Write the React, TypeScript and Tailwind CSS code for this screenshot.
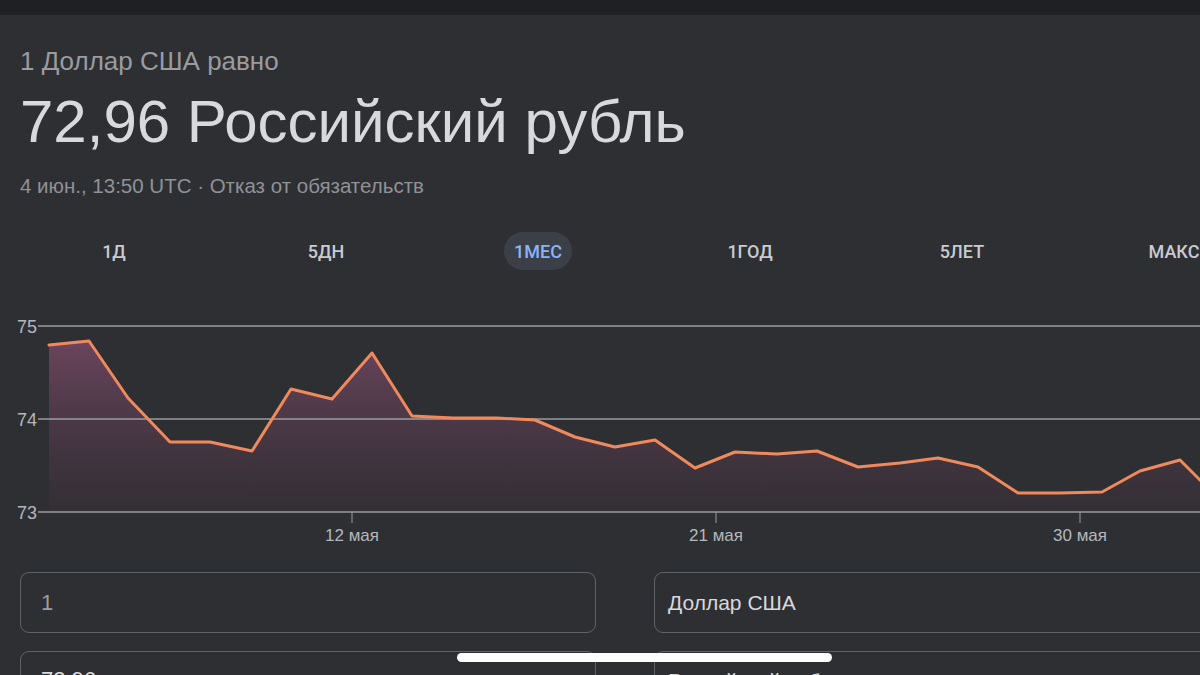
import React from "react";

const pts: [number, number][] = [
  [49, 345], [89, 341], [128, 398], [170, 442], [210, 442], [252, 451], [291, 389],
  [332, 399], [372, 353], [412, 416], [453, 418], [497, 418], [535, 420], [575, 437],
  [615, 447], [655, 440], [695, 468], [735, 452], [777, 454], [817, 451], [858, 467],
  [900, 463], [938, 458], [978, 467], [1018, 493], [1060, 493], [1102, 492], [1140, 471],
  [1180, 460], [1210, 490],
];

const TOP = 300;

function Chart() {
  const line = pts.map(([x, y], i) => `${i ? "L" : "M"}${x} ${y - TOP}`).join(" ");
  const area = `${line} L1210 ${512 - TOP} L49 ${512 - TOP} Z`;
  return (
    <svg width="1200" height="260" viewBox="0 0 1200 260" className="block">
      <defs>
        <linearGradient id="fillg" x1="0" y1="0" x2="0" y2="1">
          <stop offset="0" stopColor="#7a4a68" stopOpacity="0.8" />
          <stop offset="1" stopColor="#3a2f38" stopOpacity="0.45" />
        </linearGradient>
      </defs>
      <path d={area} fill="url(#fillg)" />
      {[326, 419, 512].map((y) => (
        <line key={y} x1="38" x2="1200" y1={y - TOP} y2={y - TOP} stroke="#9a9ca1" strokeWidth="1.5" />
      ))}
      {[
        ["75", 326],
        ["74", 419],
        ["73", 512],
      ].map(([t, y]) => (
        <text key={t} x="17" y={(y as number) - TOP + 7} fill="#b4b7bc" fontSize="18" fontFamily="'Liberation Sans', sans-serif">
          {t}
        </text>
      ))}
      <path d={line} fill="none" stroke="#f08a5d" strokeWidth="3" strokeLinejoin="round" strokeLinecap="round" />
      {[
        ["12 мая", 352],
        ["21 мая", 716],
        ["30 мая", 1080],
      ].map(([t, x]) => (
        <g key={t}>
          <line x1={x} x2={x} y1={512 - TOP} y2={523 - TOP} stroke="#9a9ca1" strokeWidth="1" />
          <text x={x} y={541 - TOP} textAnchor="middle" fill="#b4b7bc" fontSize="17" fontFamily="'Liberation Sans', sans-serif">
            {t}
          </text>
        </g>
      ))}
    </svg>
  );
}

export default function App() {
  const tabs = ["1Д", "5ДН", "1МЕС", "1ГОД", "5ЛЕТ", "МАКС"];
  return (
    <div className="w-[1200px] h-[675px] overflow-hidden bg-[#2e2f33] relative" style={{ fontFamily: "'Liberation Sans', Arial, sans-serif" }}>
      <div className="h-[15px] bg-[#1f2023]" />
      <div className="pl-5 pt-[31px]">
        <div className="text-[26px] leading-[30px] text-[#9a9ca0]">1 Доллар США равно</div>
        <div className="mt-[14px] text-[60px] leading-[64px] text-[#d8d9dc]">72,96 Российский рубль</div>
        <div className="mt-[20px] text-[20.5px] leading-[24px] text-[#8f9296]">4 июн., 13:50 UTC · Отказ от обязательств</div>
      </div>
      <div className="flex pl-2 mt-[34px] h-[38px] items-center" style={{ fontFamily: "Roboto, sans-serif" }}>
        {tabs.map((t) => (
          <div key={t} className="w-[212px] shrink-0 flex justify-center">
            {t === "1МЕС" ? (
              <span className="px-[10px] h-[38px] flex items-center rounded-full bg-[#3b3f47] text-[#8ab4f8] text-[18px] font-medium">{t}</span>
            ) : (
              <span className="h-[38px] flex items-center text-[#c9cbcf] text-[18px] font-medium">{t}</span>
            )}
          </div>
        ))}
      </div>
      <div className="mt-[30px]">
        <Chart />
      </div>
      <div className="flex gap-[58px] pl-5 mt-[12px]">
        <div className="w-[576px] h-[61px] shrink-0 rounded-[9px] border border-[#5f6368] flex items-center px-[20px] text-[22px] text-[#9a9ca0]">1</div>
        <div className="w-[600px] h-[61px] shrink-0 rounded-[9px] border border-[#5f6368] flex items-center px-[13px] text-[21px] text-[#d8d9dc]">Доллар США</div>
      </div>
      <div className="flex gap-[58px] pl-5 mt-[18px]">
        <div className="w-[576px] h-[61px] shrink-0 rounded-[9px] border border-[#5f6368] flex items-start pt-[11px] px-[20px] text-[22px] text-[#d8d9dc]">72,96</div>
        <div className="w-[600px] h-[61px] shrink-0 rounded-[9px] border border-[#5f6368] flex items-start pt-[13px] px-[13px] text-[21px] text-[#d8d9dc]">Российский рубль</div>
      </div>
      <div className="absolute left-[457px] top-[653px] w-[375px] h-[9px] rounded-full bg-white" />
    </div>
  );
}
